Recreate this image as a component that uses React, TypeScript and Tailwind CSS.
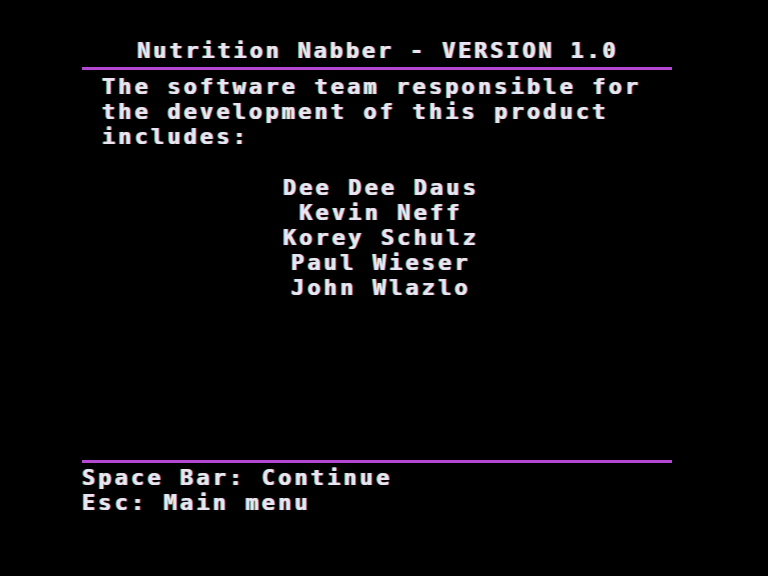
import React from "react";

const names = ["Dee Dee Daus", "Kevin Neff", "Korey Schulz", "Paul Wieser", "John Wlazlo"];

export default function App() {
  return (
    <div className="w-[768px] h-[576px] bg-black overflow-hidden">
      <div
        className="ml-[82px] w-[590px] flex flex-col text-[#ece4f2] font-bold text-[22px] leading-[25px] tracking-[3.1px] whitespace-pre [text-shadow:-1px_0_#6f9a4c,1px_0_#8a5aa8]"
        style={{ fontFamily: '"DejaVu Sans Mono", "Liberation Mono", monospace' }}
      >
        <div className="mt-[38px] text-center pl-[2px] tracking-[2.8px]">Nutrition Nabber - VERSION 1.0</div>
        <div className="mt-[4px] h-[3px] bg-[#b548d2]" />
        <div className="mt-[4px] pl-[20px] flex flex-col">
          <div>The software team responsible for</div>
          <div>the development of this product</div>
          <div>includes:</div>
        </div>
        <div className="mt-[26px] flex flex-col items-center pl-[8px]">
          {names.map((n) => (
            <div key={n}>{n}</div>
          ))}
        </div>
        <div className="mt-[160px] h-[3px] bg-[#b548d2]" />
        <div className="mt-[2px] flex flex-col">
          <div>Space Bar: Continue</div>
          <div>Esc: Main menu</div>
        </div>
      </div>
    </div>
  );
}
